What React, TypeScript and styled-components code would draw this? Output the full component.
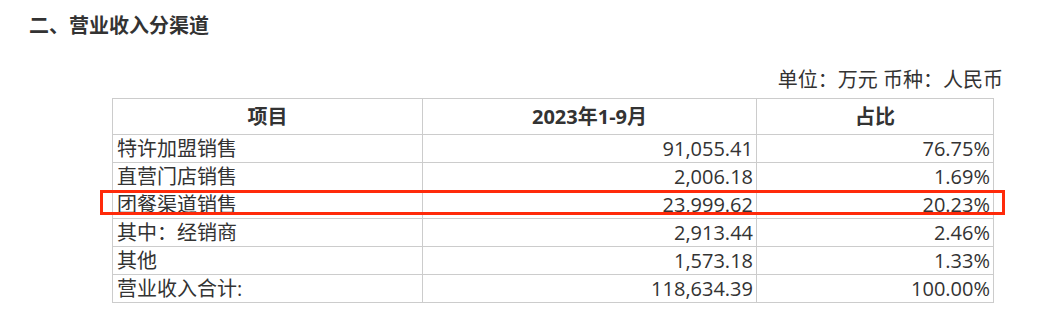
import React from "react";
import styled, { createGlobalStyle } from "styled-components";

const GlobalStyle = createGlobalStyle`
  html, body { margin: 0; padding: 0; background: #ffffff; }
  body { font-family: "Open Sans", "Noto Sans CJK SC", sans-serif; color: #333333; }
`;

const Page = styled.div`
  width: 1058px;
  height: 310px;
  box-sizing: border-box;
  padding-top: 12px;
  overflow: hidden;
`;

const Title = styled.h2`
  margin: 0 0 0 29px;
  font-size: 20px;
  line-height: 28px;
  font-weight: 700;
  color: #333333;
`;

const Unit = styled.div`
  margin-top: 26px;
  width: 1003px;
  text-align: right;
  font-size: 20px;
  line-height: 28px;
  color: #333333;
`;

const TableWrap = styled.div`
  position: relative;
  margin: 4px 0 0 112px;
  width: 881px;
`;

const Table = styled.table`
  border-collapse: collapse;
  width: 881px;
  table-layout: fixed;
  font-size: 20px;
  color: #333333;
`;

const Head = styled.th`
  height: 35px;
  padding: 0;
  border: 1px solid #cccccc;
  font-weight: 700;
  text-align: center;
  line-height: 28px;
`;

const Cell = styled.td<{ $num?: boolean }>`
  height: 27px;
  padding: 0 ${(p) => (p.$num ? "3px" : "0")} 0 ${(p) => (p.$num ? "0" : "4px")};
  border: 1px solid #cccccc;
  text-align: ${(p) => (p.$num ? "right" : "left")};
  line-height: 26px;
  white-space: nowrap;
`;

const Highlight = styled.div`
  position: absolute;
  left: -12px;
  top: 92px;
  width: 905px;
  height: 25px;
  box-sizing: border-box;
  border: 3px solid #ff2a0a;
  pointer-events: none;
`;

const rows = [
  ["特许加盟销售", "91,055.41", "76.75%"],
  ["直营门店销售", "2,006.18", "1.69%"],
  ["团餐渠道销售", "23,999.62", "20.23%"],
  ["其中：经销商", "2,913.44", "2.46%"],
  ["其他", "1,573.18", "1.33%"],
  ["营业收入合计:", "118,634.39", "100.00%"],
];

export default function App() {
  return (
    <>
      <GlobalStyle />
      <Page>
        <Title>二、营业收入分渠道</Title>
        <Unit>单位：万元 币种：人民币</Unit>
        <TableWrap>
          <Table>
            <colgroup>
              <col style={{ width: 310 }} />
              <col style={{ width: 334 }} />
              <col style={{ width: 237 }} />
            </colgroup>
            <thead>
              <tr>
                <Head>项目</Head>
                <Head>2023年1-9月</Head>
                <Head>占比</Head>
              </tr>
            </thead>
            <tbody>
              {rows.map((r) => (
                <tr key={r[0]}>
                  <Cell>{r[0]}</Cell>
                  <Cell $num>{r[1]}</Cell>
                  <Cell $num>{r[2]}</Cell>
                </tr>
              ))}
            </tbody>
          </Table>
          <Highlight />
        </TableWrap>
      </Page>
    </>
  );
}
